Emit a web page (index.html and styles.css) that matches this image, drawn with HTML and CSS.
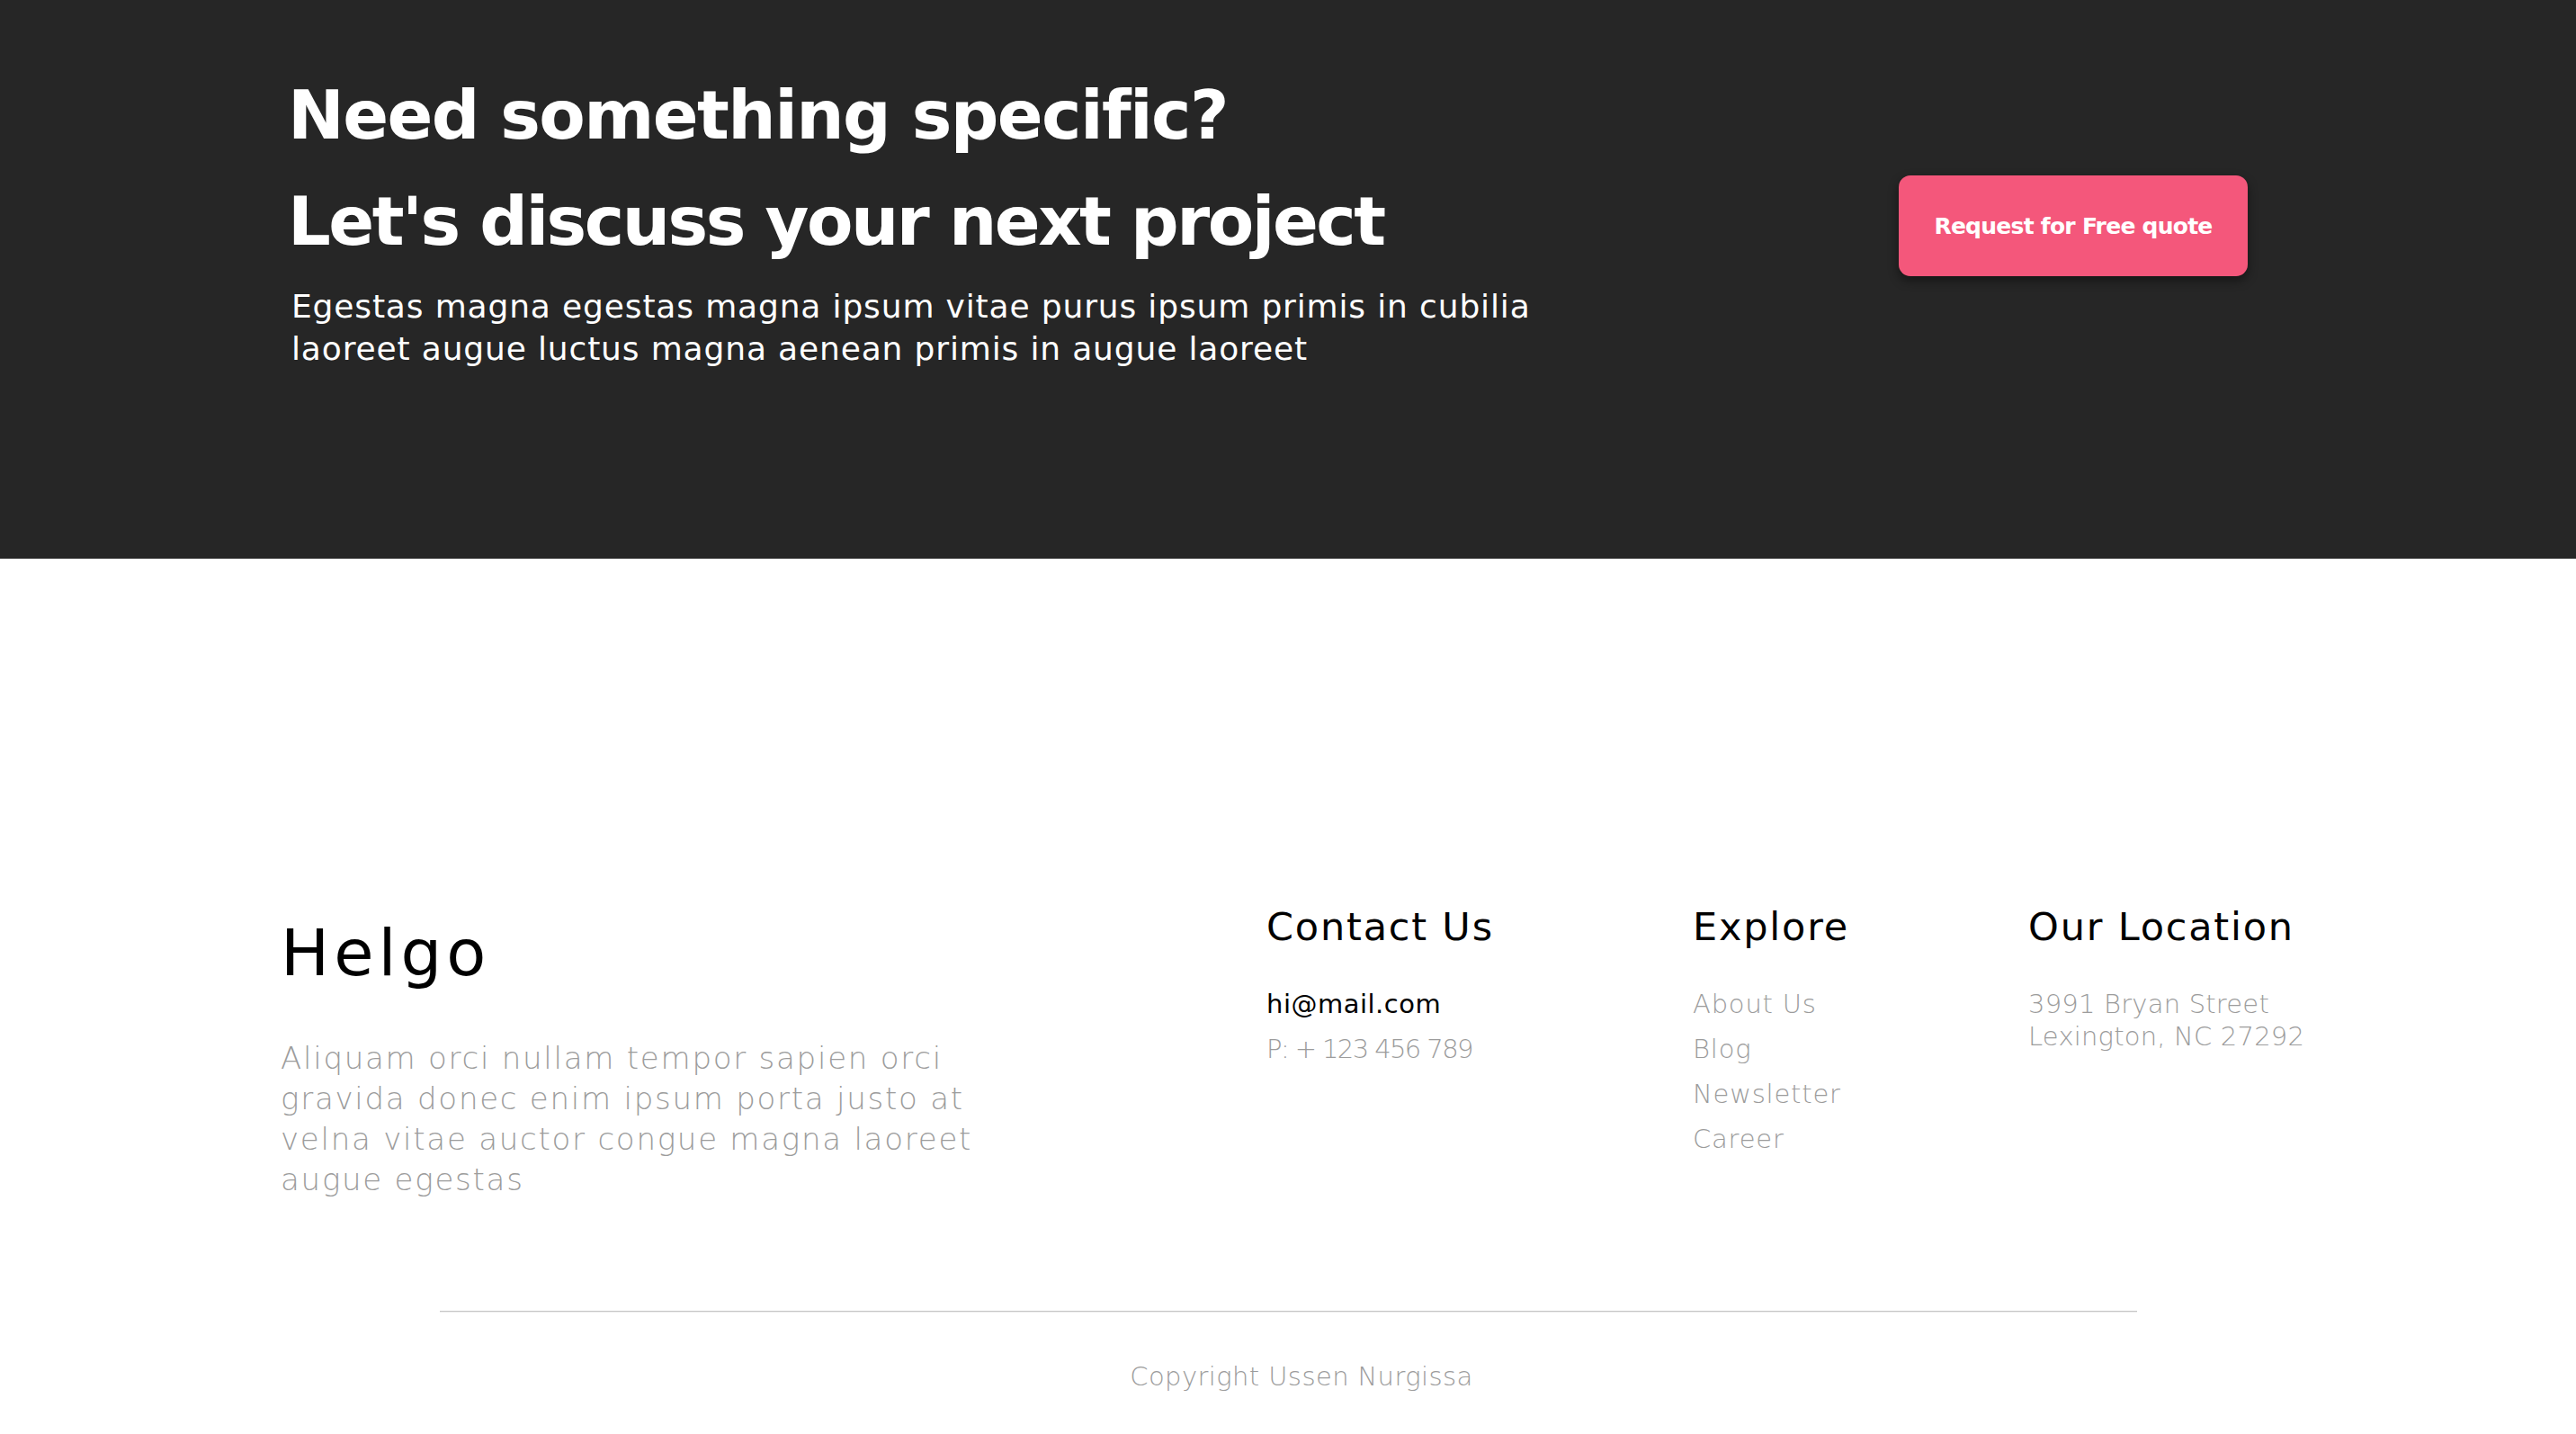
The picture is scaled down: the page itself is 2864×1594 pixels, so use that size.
FILE: index.html
```html
<!DOCTYPE html>
<html lang="en">
<head>
<meta charset="utf-8">
<title>Helgo</title>
<link rel="stylesheet" href="styles.css">
</head>
<body>
<section class="cta">
  <div class="cta-inner">
    <div class="cta-text">
      <h1 class="cta-title cta-title-first">Need something specific?</h1>
      <h2 class="cta-title">Let's discuss your next project</h2>
      <p class="cta-lead">Egestas magna egestas magna ipsum vitae purus ipsum primis in cubilia laoreet augue luctus magna aenean primis in augue laoreet</p>
    </div>
    <a class="cta-btn" href="#">Request for Free quote</a>
  </div>
</section>
<footer class="footer">
  <div class="footer-grid">
    <div class="brand">
      <div class="brand-name">Helgo</div>
      <p class="brand-text">Aliquam orci nullam tempor sapien orci gravida donec enim ipsum porta justo at velna vitae auctor congue magna laoreet augue egestas</p>
    </div>
    <div class="col">
      <h3 class="col-title">Contact Us</h3>
      <ul class="list">
        <li class="mail">hi@mail.com</li>
        <li class="phone">P: + 123 456 789</li>
      </ul>
    </div>
    <div class="col">
      <h3 class="col-title">Explore</h3>
      <ul class="list">
        <li>About Us</li>
        <li>Blog</li>
        <li>Newsletter</li>
        <li>Career</li>
      </ul>
    </div>
    <div class="col">
      <h3 class="col-title">Our Location</h3>
      <p class="address">3991 Bryan Street<br>Lexington, NC 27292</p>
    </div>
  </div>
  <hr class="rule">
  <p class="copyright">Copyright Ussen Nurgissa</p>
</footer>
</body>
</html>
```

FILE: styles.css
```css
html, body {
  margin: 0;
  padding: 0;
  background: #ffffff;
}
body {
  font-family: "DejaVu Sans", "Liberation Sans", sans-serif;
  color: #000;
}
.cta {
  background: #262626;
  height: 621px;
  box-sizing: border-box;
  padding-top: 69px;
}
.cta-inner {
  display: flex;
  align-items: flex-start;
  padding-left: 320px;
  padding-right: 365px;
}
.cta-text {
  flex: 1;
}
.cta-title {
  margin: 0;
  color: #fff;
  font-size: 75px;
  font-weight: 700;
  line-height: 118px;
  letter-spacing: -2.5px;
}
.cta-title-first {
  letter-spacing: -1.6px;
}
.cta-lead {
  margin: 12px 0 0 4px;
  max-width: 1400px;
  color: #fff;
  font-size: 36px;
  line-height: 47px;
  letter-spacing: 0.85px;
}
.cta-btn {
  margin-top: 126px;
  width: 388px;
  height: 112px;
  display: flex;
  align-items: center;
  justify-content: center;
  background: #f4577b;
  color: #fff;
  border-radius: 13px;
  font-size: 25px;
  font-weight: 700;
  letter-spacing: -0.75px;
  text-decoration: none;
  box-shadow: 0 5px 12px rgba(0, 0, 0, 0.45);
}
.footer {
  padding-top: 383px;
  padding-bottom: 44px;
}
.footer-grid {
  display: grid;
  grid-template-columns: 1096px 474px 373px 1fr;
  padding-left: 312px;
  align-items: start;
}
.brand-name {
  margin-top: 13px;
  font-size: 72px;
  line-height: 85px;
  letter-spacing: 5px;
}
.brand-text {
  margin: 52px 0 0 0;
  max-width: 780px;
  color: #9c9c9c;
  font-size: 34px;
  font-weight: 200;
  line-height: 45px;
  letter-spacing: 1.75px;
}
.col-title {
  margin: 0;
  font-size: 43px;
  font-weight: 400;
  line-height: 52px;
  letter-spacing: 1.8px;
}
.list {
  list-style: none;
  margin: 35px 0 0 0;
  padding: 0;
  font-size: 29px;
  line-height: 50px;
  color: #9c9c9c;
  font-weight: 200;
  letter-spacing: 0.8px;
}
.list .mail {
  color: #000;
  font-weight: 400;
  letter-spacing: 0.5px;
}
.list .phone {
  letter-spacing: -1.6px;
}
.address {
  margin: 42px 0 0 0;
  font-size: 29px;
  line-height: 36px;
  color: #9c9c9c;
  font-weight: 200;
  letter-spacing: 0.2px;
}
.rule {
  width: 1887px;
  height: 0;
  margin: 123px auto 0 auto;
  border: 0;
  border-top: 1px solid #c6c6c6;
  border-bottom: 1px solid #ececec;
}
.copyright {
  margin: 51px 0 0 0;
  padding-left: 30px;
  text-align: center;
  color: #9c9c9c;
  font-size: 29px;
  font-weight: 200;
  line-height: 40px;
  letter-spacing: 0.4px;
}
```
